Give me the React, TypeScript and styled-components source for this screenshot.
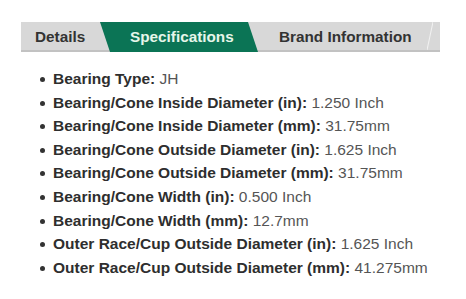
import React from 'react';
import styled, { createGlobalStyle } from 'styled-components';

const GlobalStyle = createGlobalStyle`
  html, body {
    margin: 0;
    padding: 0;
    background: #ffffff;
  }
  body {
    font-family: "Liberation Sans", Arial, sans-serif;
  }
`;

const Page = styled.div`
  width: 466px;
  height: 299px;
  padding: 22px 0 0 21px;
  box-sizing: border-box;
`;

const TabBar = styled.div`
  display: flex;
  width: 419px;
  height: 30px;
  background: #d8d8d8;
  box-shadow: inset 0 -2px 0 #c2c2c2;
  position: relative;
`;

const Tab = styled.div<{ $active?: boolean; $width: number; $pad: number }>`
  display: flex;
  align-items: center;
  width: ${({ $width }) => $width}px;
  padding-left: ${({ $pad }) => $pad}px;
  box-sizing: border-box;
  flex-shrink: 0;
  font-size: 15.3px;
  font-weight: bold;
  color: ${({ $active }) => ($active ? '#e6f6ea' : '#333333')};
  background: ${({ $active }) => ($active ? '#0b7455' : 'transparent')};
  clip-path: ${({ $active }) =>
    $active ? 'polygon(0 0, calc(100% - 10px) 0, 100% 100%, 10px 100%)' : 'none'};
`;

const Slash = styled.div`
  position: absolute;
  right: 7px;
  top: 0;
  width: 6px;
  height: 28px;
  background: linear-gradient(to right bottom, transparent calc(50% - 1px), #f2f2f2 50%, transparent calc(50% + 1px));
`;

const SpecList = styled.ul`
  margin: 15px 0 0;
  padding: 0 0 0 32px;
  list-style: none;
`;

const SpecItem = styled.li`
  position: relative;
  font-size: 15.5px;
  line-height: 23.6px;
  color: #555555;
  white-space: nowrap;

  &::before {
    content: '';
    position: absolute;
    left: -13px;
    top: 10px;
    width: 5px;
    height: 5px;
    border-radius: 50%;
    background: #333333;
  }
`;

const Label = styled.span`
  font-weight: bold;
  color: #2e2e2e;
`;

const specs: [string, string][] = [
  ['Bearing Type', 'JH'],
  ['Bearing/Cone Inside Diameter (in)', '1.250 Inch'],
  ['Bearing/Cone Inside Diameter (mm)', '31.75mm'],
  ['Bearing/Cone Outside Diameter (in)', '1.625 Inch'],
  ['Bearing/Cone Outside Diameter (mm)', '31.75mm'],
  ['Bearing/Cone Width (in)', '0.500 Inch'],
  ['Bearing/Cone Width (mm)', '12.7mm'],
  ['Outer Race/Cup Outside Diameter (in)', '1.625 Inch'],
  ['Outer Race/Cup Outside Diameter (mm)', '41.275mm'],
];

export default function App() {
  return (
    <Page>
      <GlobalStyle />
      <TabBar>
        <Tab $width={89} $pad={14}>Details</Tab>
        <Tab $active $width={158} $pad={30} style={{ marginLeft: -10 }}>
          Specifications
        </Tab>
        <Tab $width={160} $pad={21}>Brand Information</Tab>
        <Slash />
      </TabBar>
      <SpecList>
        {specs.map(([label, value]) => (
          <SpecItem key={label}>
            <Label>{label}:</Label> {value}
          </SpecItem>
        ))}
      </SpecList>
    </Page>
  );
}
